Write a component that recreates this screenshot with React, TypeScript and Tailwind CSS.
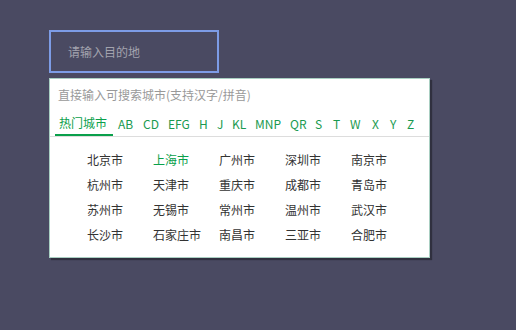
import React from "react";

// letter tabs with the width each one takes in the row
const LETTERS: [string, string][] = [
  ["AB", "w-[25px]"], ["CD", "w-[25px]"], ["EFG", "w-[31px]"], ["H", "w-[18px]"],
  ["J", "w-[15px]"], ["KL", "w-[23px]"], ["MNP", "w-[35px]"], ["QR", "w-[25px]"],
  ["S", "w-[18px]"], ["T", "w-[17px]"], ["W", "w-[22px]"], ["X", "w-[18px]"],
  ["Y", "w-[17px]"], ["Z", "w-[12px]"],
];

const CITIES = [
  "北京市", "上海市", "广州市", "深圳市", "南京市",
  "杭州市", "天津市", "重庆市", "成都市", "青岛市",
  "苏州市", "无锡市", "常州市", "温州市", "武汉市",
  "长沙市", "石家庄市", "南昌市", "三亚市", "合肥市",
];

export default function App() {
  return (
    <div
      className="w-full h-screen bg-[#4a4a62] pt-[30px] pl-[49px]"
      style={{ fontFamily: '"Noto Sans CJK SC", "Noto Sans", sans-serif' }}
    >
      {/* Input */}
      <input
        className="block w-[170px] h-[43px] border-2 border-[#7d9ce6] bg-transparent pl-[17px] text-[12px] text-white placeholder:text-[#a3a3ae] outline-none"
        placeholder="请输入目的地"
      />

      {/* Dropdown panel */}
      <div className="mt-[5px] w-[381px] bg-white border border-[#a9cfc2] shadow-[2px_2px_1px_rgba(0,0,0,0.35)]">
        <div className="h-[32px] flex items-center pl-[8px] text-[12px] text-[#999]">
          直接输入可搜索城市(支持汉字/拼音)
        </div>

        <div className="flex items-stretch h-[26px] border-b border-[#ddd] pl-[5px] text-[12px] whitespace-nowrap">
          <div className="shrink-0 w-[58px] pl-[4px] border-b-2 border-[#0aa04b] text-[#0aa04b] flex items-center">
            热门城市
          </div>
          <div className="flex items-center pl-[5px] text-[#1a9a50]">
            {LETTERS.map(([l, w]) => (
              <span key={l} className={`shrink-0 ${w}`}>{l}</span>
            ))}
          </div>
        </div>

        <div className="grid grid-cols-[repeat(5,66px)] pl-[37px] pt-[10px] pb-[10px] text-[12px] text-[#333]">
          {CITIES.map((c) => (
            <div key={c} className={`h-[25px] leading-[25px] ${c === "上海市" ? "text-[#0aa04b]" : ""}`}>
              {c}
            </div>
          ))}
        </div>
      </div>
    </div>
  );
}
